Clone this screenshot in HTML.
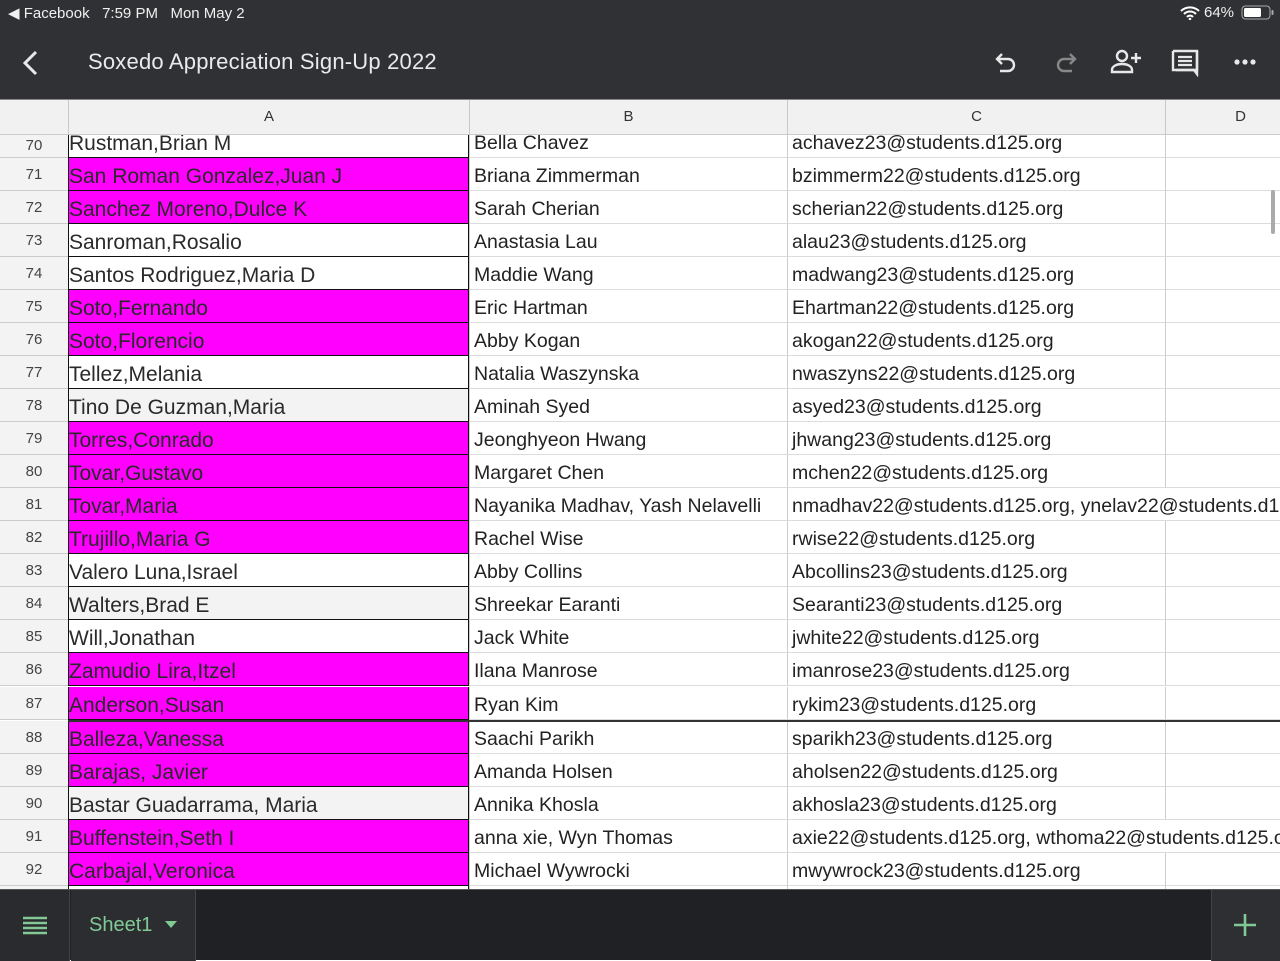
<!DOCTYPE html>
<html><head><meta charset="utf-8"><style>
*{margin:0;padding:0;box-sizing:border-box}
body{width:1280px;height:960px;overflow:hidden;background:#fff;font-family:"Liberation Sans",sans-serif;position:relative}
.top{position:absolute;left:0;top:0;width:1280px;height:99px;background:#303134;color:#e8e8e8}
.sb{position:absolute;top:4px;font-size:15px;color:#f0f0f0}
.title{position:absolute;left:88px;top:49px;font-size:22px;color:#e8eaed;letter-spacing:0.2px}
.hdr{position:absolute;top:99px;left:0;width:1280px;height:36px;background:#f1f1f1;border-top:1px solid #888;border-bottom:1px solid #ccc}
.hdr div{position:absolute;top:0;height:35px;line-height:34px;text-align:center;font-size:15px;color:#333;border-left:1px solid #c8c8c8}
.grid{position:absolute;top:135px;left:0;width:1280px;height:754px;overflow:hidden}
.r{position:absolute;left:0;width:1280px;height:33px}
.r div{position:absolute;top:0;height:33px;line-height:33px;padding-top:2px;font-size:19.5px;color:#222;white-space:nowrap;overflow:hidden;border-bottom:1px solid #dcdcdc}
.n{left:0;width:68px;background:#f3f3f3;text-align:center;font-size:15px!important;color:#444!important;border-bottom:1px solid #ccc!important;padding-top:0!important}
.a{left:68px;width:401px;background:#fff;border:1px solid #111!important;border-top:none!important;color:#2a2a2a!important;font-size:21px!important}
.a.m{background:#ff00ff}
.a.g{background:#f3f3f3}
.b{left:469px;width:318px;padding-left:4px;border-left:1px solid #ccc}
.c{left:787px;width:378px;padding-left:4px;border-left:1px solid #ccc}
.d{left:1165px;width:115px;border-left:1px solid #ccc}
.bot{position:absolute;left:0;top:889px;width:1280px;height:71px;background:#202124;border-top:1px solid #555}
</style></head><body>
<div class="top">
 <div class="sb" style="left:8px">◀ Facebook&nbsp;&nbsp;&nbsp;7:59 PM&nbsp;&nbsp;&nbsp;Mon May 2</div>
 <div class="sb" style="left:1204px">64%</div>
 <svg style="position:absolute;left:1180px;top:6px" width="20" height="14" viewBox="0 0 20 14"><path d="M1 5a13 13 0 0 1 18 0M4 8a8.5 8.5 0 0 1 12 0M7 11a4 4 0 0 1 6 0" stroke="#fff" stroke-width="2" fill="none"/><circle cx="10" cy="13" r="1.3" fill="#fff"/></svg>
 <svg style="position:absolute;left:1241px;top:5px" width="34" height="16"><rect x="1" y="1" width="28" height="13" rx="3.5" stroke="#aaa" fill="none"/><rect x="3" y="3" width="17" height="9" rx="1.5" fill="#fff"/><rect x="30.5" y="5" width="2" height="5" rx="1" fill="#aaa"/></svg>
 <svg style="position:absolute;left:20px;top:50px" width="20" height="26"><path d="M16 2L5 13l11 11" stroke="#e8e8e8" stroke-width="3" fill="none"/></svg>
 <div class="title">Soxedo Appreciation Sign-Up 2022</div>
 <svg style="position:absolute;left:993px;top:50px" width="26" height="26" viewBox="0 0 26 26"><path d="M9 4L4 9l5 5M4 9h11a6 6 0 0 1 0 12H7" stroke="#e8e8e8" stroke-width="2.4" fill="none"/></svg>
 <svg style="position:absolute;left:1053px;top:50px" width="26" height="26" viewBox="0 0 26 26"><path d="M17 4l5 5-5 5M22 9H11a6 6 0 0 0 0 12h8" stroke="#888" stroke-width="2.4" fill="none"/></svg>
 <svg style="position:absolute;left:1110px;top:48px" width="32" height="28" viewBox="0 0 32 28"><circle cx="12" cy="8" r="5" stroke="#e8e8e8" stroke-width="2.4" fill="none"/><path d="M2 24v-2c0-4 5-6 10-6s10 2 10 6v2z" stroke="#e8e8e8" stroke-width="2.4" fill="none"/><path d="M26 5v10M21 10h10" stroke="#e8e8e8" stroke-width="2.4"/></svg>
 <svg style="position:absolute;left:1171px;top:49px" width="28" height="28" viewBox="0 0 28 28"><path d="M2 2h24v19H8l-3 0" stroke="#e8e8e8" stroke-width="2.4" fill="none"/><path d="M2 2v19h21l3 4V2" stroke="#e8e8e8" stroke-width="2.4" fill="none"/><path d="M7 8h14M7 12h14M7 16h14" stroke="#e8e8e8" stroke-width="2.2"/></svg>
 <svg style="position:absolute;left:1234px;top:58px" width="24" height="8"><circle cx="3" cy="4" r="2.6" fill="#e8e8e8"/><circle cx="11" cy="4" r="2.6" fill="#e8e8e8"/><circle cx="19" cy="4" r="2.6" fill="#e8e8e8"/></svg>
</div>
<div class="hdr">
 <div style="left:0;width:68px;border-left:none"></div>
 <div style="left:68px;width:401px">A</div>
 <div style="left:469px;width:318px">B</div>
 <div style="left:787px;width:378px">C</div>
 <div style="left:1165px;width:150px">D</div>
</div>
<div class="grid">
<div class="r" style="top:-10px"><div class="n" style="padding-top:4px!important">70</div><div class="a">Rustman,Brian M</div><div class="b">Bella Chavez</div><div class="c">achavez23@students.d125.org</div><div class="d"></div></div>
<div class="r" style="top:23px"><div class="n">71</div><div class="a m">San Roman Gonzalez,Juan J</div><div class="b">Briana Zimmerman</div><div class="c">bzimmerm22@students.d125.org</div><div class="d"></div></div>
<div class="r" style="top:56px"><div class="n">72</div><div class="a m">Sanchez Moreno,Dulce K</div><div class="b">Sarah Cherian</div><div class="c">scherian22@students.d125.org</div><div class="d"></div></div>
<div class="r" style="top:89px"><div class="n">73</div><div class="a">Sanroman,Rosalio</div><div class="b">Anastasia Lau</div><div class="c">alau23@students.d125.org</div><div class="d"></div></div>
<div class="r" style="top:122px"><div class="n">74</div><div class="a">Santos Rodriguez,Maria D</div><div class="b">Maddie Wang</div><div class="c">madwang23@students.d125.org</div><div class="d"></div></div>
<div class="r" style="top:155px"><div class="n">75</div><div class="a m">Soto,Fernando</div><div class="b">Eric Hartman</div><div class="c">Ehartman22@students.d125.org</div><div class="d"></div></div>
<div class="r" style="top:188px"><div class="n">76</div><div class="a m">Soto,Florencio</div><div class="b">Abby Kogan</div><div class="c">akogan22@students.d125.org</div><div class="d"></div></div>
<div class="r" style="top:221px"><div class="n">77</div><div class="a">Tellez,Melania</div><div class="b">Natalia Waszynska</div><div class="c">nwaszyns22@students.d125.org</div><div class="d"></div></div>
<div class="r" style="top:254px"><div class="n">78</div><div class="a g">Tino De Guzman,Maria</div><div class="b">Aminah Syed</div><div class="c">asyed23@students.d125.org</div><div class="d"></div></div>
<div class="r" style="top:287px"><div class="n">79</div><div class="a m">Torres,Conrado</div><div class="b">Jeonghyeon Hwang</div><div class="c">jhwang23@students.d125.org</div><div class="d"></div></div>
<div class="r" style="top:320px"><div class="n">80</div><div class="a m">Tovar,Gustavo</div><div class="b">Margaret Chen</div><div class="c">mchen22@students.d125.org</div><div class="d"></div></div>
<div class="r" style="top:353px"><div class="n">81</div><div class="a m">Tovar,Maria</div><div class="b">Nayanika Madhav, Yash Nelavelli</div><div class="c" style="width:493px;overflow:hidden">nmadhav22@students.d125.org, ynelav22@students.d125.org</div></div>
<div class="r" style="top:386px"><div class="n">82</div><div class="a m">Trujillo,Maria G</div><div class="b">Rachel Wise</div><div class="c">rwise22@students.d125.org</div><div class="d"></div></div>
<div class="r" style="top:419px"><div class="n">83</div><div class="a">Valero Luna,Israel</div><div class="b">Abby Collins</div><div class="c">Abcollins23@students.d125.org</div><div class="d"></div></div>
<div class="r" style="top:452px"><div class="n">84</div><div class="a g">Walters,Brad E</div><div class="b">Shreekar Earanti</div><div class="c">Searanti23@students.d125.org</div><div class="d"></div></div>
<div class="r" style="top:485px"><div class="n">85</div><div class="a">Will,Jonathan</div><div class="b">Jack White</div><div class="c">jwhite22@students.d125.org</div><div class="d"></div></div>
<div class="r" style="top:518px"><div class="n">86</div><div class="a m">Zamudio Lira,Itzel</div><div class="b">Ilana Manrose</div><div class="c">imanrose23@students.d125.org</div><div class="d"></div></div>
<div class="r" style="top:552px"><div class="n">87</div><div class="a m">Anderson,Susan</div><div class="b">Ryan Kim</div><div class="c">rykim23@students.d125.org</div><div class="d"></div></div>
<div class="r" style="top:586px"><div class="n">88</div><div class="a m">Balleza,Vanessa</div><div class="b">Saachi Parikh</div><div class="c">sparikh23@students.d125.org</div><div class="d"></div></div>
<div class="r" style="top:619px"><div class="n">89</div><div class="a m">Barajas, Javier</div><div class="b">Amanda Holsen</div><div class="c">aholsen22@students.d125.org</div><div class="d"></div></div>
<div class="r" style="top:652px"><div class="n">90</div><div class="a g">Bastar Guadarrama, Maria</div><div class="b">Annika Khosla</div><div class="c">akhosla23@students.d125.org</div><div class="d"></div></div>
<div class="r" style="top:685px"><div class="n">91</div><div class="a m">Buffenstein,Seth I</div><div class="b">anna xie, Wyn Thomas</div><div class="c" style="width:493px;overflow:hidden">axie22@students.d125.org, wthoma22@students.d125.org</div></div>
<div class="r" style="top:718px"><div class="n">92</div><div class="a m">Carbajal,Veronica</div><div class="b">Michael Wywrocki</div><div class="c">mwywrock23@students.d125.org</div><div class="d"></div></div>
<div class="r" style="top:751px"><div class="n"></div><div class="a"></div><div class="b"></div><div class="c"></div><div class="d"></div></div>
<div style="position:absolute;left:68px;top:585px;width:1212px;height:2px;background:#333"></div>
<div style="position:absolute;left:1271px;top:55px;width:4px;height:44px;background:#aaa;border-radius:2px"></div>
</div>
<div class="bot">
 <div style="position:absolute;left:0;top:0;width:70px;height:71px;background:#2a2b2e;border-right:1px solid #444"></div>
 <svg style="position:absolute;left:23px;top:26px" width="24" height="20"><path d="M0 2h24M0 7h24M0 12h24M0 17h24" stroke="#81c995" stroke-width="2.4"/></svg>
 <div style="position:absolute;left:71px;top:0;width:125px;height:71px;background:#2c2d30;border-right:1px solid #444"></div>
 <div style="position:absolute;left:89px;top:24px;font-size:20px;color:#81c995">Sheet1</div>
 <svg style="position:absolute;left:165px;top:31px" width="12" height="8"><path d="M0 0h12L6 7z" fill="#81c995"/></svg>
 <div style="position:absolute;left:1211px;top:0;width:69px;height:71px;background:#2e2f32;border-left:1px solid #444"></div>
 <svg style="position:absolute;left:1234px;top:24px" width="22" height="22"><path d="M11 0v22M0 11h22" stroke="#81c995" stroke-width="2.6"/></svg>
</div>
</body></html>
